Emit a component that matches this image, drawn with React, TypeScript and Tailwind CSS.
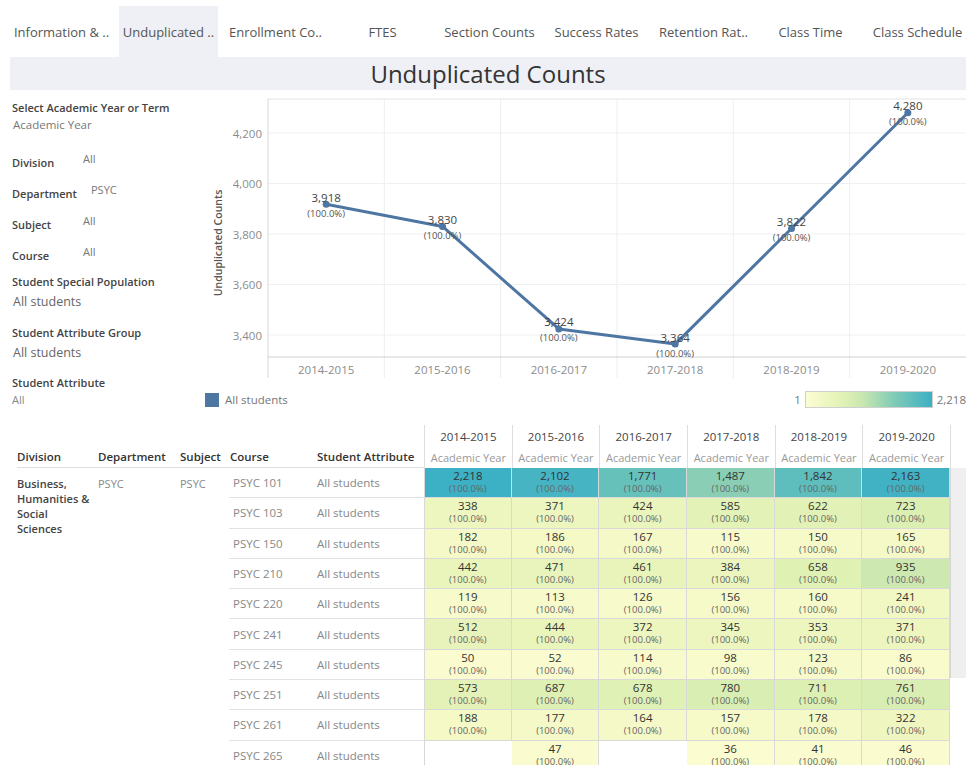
import React from "react";

const tabs = [
  "Information & ..",
  "Unduplicated ..",
  "Enrollment Co..",
  "FTES",
  "Section Counts",
  "Success Rates",
  "Retention Rat..",
  "Class Time",
  "Class Schedule",
];

const years = ["2014-2015", "2015-2016", "2016-2017", "2017-2018", "2018-2019", "2019-2020"];
const totals = [3918, 3830, 3424, 3364, 3822, 4280];

const courses: { course: string; counts: (number | null)[] }[] = [
  { course: "PSYC 101", counts: [2218, 2102, 1771, 1487, 1842, 2163] },
  { course: "PSYC 103", counts: [338, 371, 424, 585, 622, 723] },
  { course: "PSYC 150", counts: [182, 186, 167, 115, 150, 165] },
  { course: "PSYC 210", counts: [442, 471, 461, 384, 658, 935] },
  { course: "PSYC 220", counts: [119, 113, 126, 156, 160, 241] },
  { course: "PSYC 241", counts: [512, 444, 372, 345, 353, 371] },
  { course: "PSYC 245", counts: [50, 52, 114, 98, 123, 86] },
  { course: "PSYC 251", counts: [573, 687, 678, 780, 711, 761] },
  { course: "PSYC 261", counts: [188, 177, 164, 157, 178, 322] },
  { course: "PSYC 265", counts: [null, 47, null, 36, 41, 46] },
];

// yellow -> green -> teal scale, 1 .. 2,218
const stops: [number, number[]][] = [
  [0, [252, 253, 210]],
  [0.1, [243, 248, 196]],
  [0.3, [224, 241, 180]],
  [0.45, [200, 231, 176]],
  [0.6, [162, 216, 178]],
  [0.7, [128, 203, 182]],
  [0.85, [88, 188, 190]],
  [1, [60, 176, 196]],
];

function heat(v: number) {
  const t = Math.min(1, Math.max(0, (v - 1) / 2217));
  for (let i = 1; i < stops.length; i++) {
    const [t1, c1] = stops[i];
    const [t0, c0] = stops[i - 1];
    if (t <= t1) {
      const f = (t - t0) / (t1 - t0);
      const c = c0.map((x, k) => Math.round(x + (c1[k] - x) * f));
      return `rgb(${c[0]},${c[1]},${c[2]})`;
    }
  }
  return "rgb(60,176,196)";
}

const fmt = (n: number) => n.toLocaleString("en-US");

function TrendChart() {
  const left = 68;
  const right = 766;
  const top = 9;
  const axisY = 267;
  const bottom = 288;
  const band = (right - left) / 6;
  const cx = (i: number) => left + band * (i + 0.5);
  const gy = (v: number) => 43 + (4200 - v) * 0.2525;
  const ticks = [4200, 4000, 3800, 3600, 3400];
  const pts = totals.map((v, i) => `${cx(i)},${gy(v)}`).join(" ");

  return (
    <svg width={766} height={292} className="block">
      <line x1={left} y1={top} x2={right} y2={top} stroke="#e4e4e4" />
      {ticks.map((t) => (
        <line key={t} x1={left} x2={right} y1={gy(t)} y2={gy(t)} stroke="#f0f0f0" />
      ))}
      {[1, 2, 3, 4, 5].map((k) => (
        <line key={k} x1={left + band * k} x2={left + band * k} y1={top} y2={bottom} stroke="#eeeeee" />
      ))}
      <line x1={left} x2={left} y1={top} y2={bottom} stroke="#d6d6d6" />
      <line x1={left} x2={right} y1={axisY} y2={axisY} stroke="#d0d0d0" />

      {ticks.map((t) => (
        <text key={t} x={62} y={gy(t)} textAnchor="end" dominantBaseline="central" fontSize={11.5} fill="#8c8c8c">
          {fmt(t)}
        </text>
      ))}
      {years.map((y, i) => (
        <text key={y} x={cx(i)} y={279} textAnchor="middle" dominantBaseline="central" fontSize={11.5} fill="#8c8c8c">
          {y}
        </text>
      ))}
      <text
        x={18}
        y={153}
        transform="rotate(-90 18 153)"
        textAnchor="middle"
        dominantBaseline="central"
        fontSize={10.5}
        fontWeight={600}
        fill="#555"
      >
        Unduplicated Counts
      </text>

      <polyline points={pts} fill="none" stroke="#4e76a3" strokeWidth={3} strokeLinejoin="round" />
      {totals.map((v, i) => (
        <circle key={i} cx={cx(i)} cy={gy(v)} r={3.5} fill="#4e76a3" />
      ))}
      {totals.map((v, i) => (
        <g key={`l${i}`}>
          <text x={cx(i)} y={gy(v) - 7} textAnchor="middle" dominantBaseline="central" fontSize={11.5} fill="#444">
            {fmt(v)}
          </text>
          <text x={cx(i)} y={gy(v) + 9} textAnchor="middle" dominantBaseline="central" fontSize={9.5} fill="#555">
            (100.0%)
          </text>
        </g>
      ))}
    </svg>
  );
}

function Filters() {
  const row = "flex h-[31px] items-start";
  const label = "pt-[4px] font-semibold leading-[14px] text-[#444]";
  const value = "leading-[14px] text-[#777]";
  return (
    <div className="w-[190px] pl-[2px] text-[11px]">
      <div className="mt-[11px] font-semibold leading-[14px] text-[#444]">Select Academic Year or Term</div>
      <div className="mt-[3px] pl-[1px] text-[11.5px] leading-[14px] text-[#777]">Academic Year</div>

      <div className="mt-[20px]">
        <div className={row}>
          <span className={`${label} w-[71px]`}>Division</span>
          <span className={value}>All</span>
        </div>
        <div className={row}>
          <span className={`${label} w-[79px]`}>Department</span>
          <span className={value}>PSYC</span>
        </div>
        <div className={row}>
          <span className={`${label} w-[71px]`}>Subject</span>
          <span className={value}>All</span>
        </div>
        <div className={row}>
          <span className={`${label} w-[71px]`}>Course</span>
          <span className={value}>All</span>
        </div>
      </div>

      <div className="mt-[-1px] font-semibold leading-[14px] text-[#444]">Student Special Population</div>
      <div className="mt-[5px] pl-[1px] text-[12.5px] leading-[16px] text-[#666]">All students</div>
      <div className="mt-[16px] font-semibold leading-[14px] text-[#444]">Student Attribute Group</div>
      <div className="mt-[5px] pl-[1px] text-[12.5px] leading-[16px] text-[#666]">All students</div>
      <div className="mt-[15px] font-semibold leading-[14px] text-[#444]">Student Attribute</div>
      <div className="mt-[3px] leading-[14px] text-[#888]">All</div>
    </div>
  );
}

function CountsTable() {
  const head = "flex items-end border-b border-[#dedede] pb-[3px] text-[11.5px] font-semibold leading-[14px] text-[#333] whitespace-nowrap";
  return (
    <div className="text-[11px]">
      <div className="flex h-[58px]">
        <div className="w-[17px]" />
        <div className={`${head} w-[81px]`}>Division</div>
        <div className={`${head} w-[82px]`}>Department</div>
        <div className={`${head} w-[49px]`}>Subject</div>
        <div className={`${head} w-[84px] pl-[1px]`}>Course</div>
        <div className={`${head} w-[111px] pl-[4px]`}>Student Attribute</div>
        {years.map((y) => (
          <div key={y} className="mt-[15px] flex w-[87.67px] flex-col items-center border-l border-[#dedede]">
            <div className="mt-[5px] text-[11.5px] leading-[14px] text-[#444]">{y}</div>
            <div className="mt-[7px] text-[11px] leading-[14px] text-[#999] whitespace-nowrap">Academic Year</div>
          </div>
        ))}
        <div className="mt-[15px] w-[16px] border-l border-[#dedede]" />
      </div>

      <div className="flex">
        <div className="w-[17px]" />
        <div className="flex w-[212px] pt-[8px] text-[11px] leading-[15px]">
          <div className="w-[81px] pr-[8px] font-semibold text-[#444]">Business, Humanities &amp; Social Sciences</div>
          <div className="w-[82px] text-[#888]">PSYC</div>
          <div className="w-[49px] text-[#888]">PSYC</div>
        </div>
        <div className="w-[721px]">
          {courses.map((c) => (
            <div key={c.course} className="flex h-[30.3px]">
              <div className="flex w-[84px] items-center border-b border-[#e2e2e2] pl-[4px] text-[11.5px] text-[#888]">
                {c.course}
              </div>
              <div className="flex w-[111px] items-center border-b border-[#e2e2e2] pl-[4px] text-[11.5px] text-[#888]">
                All students
              </div>
              {c.counts.map((v, i) =>
                v === null ? (
                  <div key={i} className={`w-[87.67px] ${i === 0 ? "border-l border-[#d6d6d6]" : ""}`} />
                ) : (
                  <div
                    key={i}
                    className={`flex w-[87.67px] flex-col items-center border-b border-r border-[#d9d9d9] pt-[1px] ${i === 0 ? "border-l" : ""}`}
                    style={{ backgroundColor: heat(v) }}
                  >
                    <span className="text-[11.5px] leading-[14px] text-[#333]">{fmt(v)}</span>
                    <span className="text-[9.5px] leading-[12px] text-[#666]">(100.0%)</span>
                  </div>
                )
              )}
            </div>
          ))}
        </div>
        <div className="h-[210px] w-[16px] border-l border-[#d6d6d6] bg-[#efefef]" />
      </div>
    </div>
  );
}

export default function App() {
  return (
    <div className="h-[765px] w-[966px] overflow-hidden bg-white font-['Open_Sans','Noto_Sans',sans-serif]">
      <div className="flex h-[57px] pl-[8px] pt-[6px]">
        {tabs.map((t, i) => (
          <div key={t} className="w-[107px] shrink-0 px-[4px]">
            <div
              className={`flex h-full items-center justify-center whitespace-nowrap pt-[2px] text-[13px] text-[#555] ${
                i === 1 ? "bg-[#eef0f5]" : ""
              }`}
            >
              {t}
            </div>
          </div>
        ))}
      </div>

      <div className="ml-[10px] flex h-[33px] items-center justify-center bg-[#eef0f5] text-[24px] text-[#333]">
        Unduplicated Counts
      </div>

      <div className="flex h-[320px]">
        <div className="pl-[10px]">
          <Filters />
        </div>
        <div className="w-[766px]">
          <TrendChart />
          <div className="flex h-[28px] items-start justify-between pt-[9px]">
            <div className="flex items-center pl-[5px]">
              <div className="h-[14px] w-[14px] bg-[#4e76a3]" />
              <span className="ml-[6px] text-[11.5px] text-[#777]">All students</span>
            </div>
            <div className="flex items-center">
              <span className="mr-[4px] text-[11.5px] text-[#777]">1</span>
              <div className="h-[17px] w-[128px] border border-[#d0d0d0] bg-[linear-gradient(to_right,#fcfdd2,#e0f1b4_30%,#c8e7b0_45%,#80cbb6_70%,#3cb0c4)]" />
              <span className="ml-[4px] text-[11.5px] text-[#777]">2,218</span>
            </div>
          </div>
        </div>
      </div>

      <CountsTable />
    </div>
  );
}
